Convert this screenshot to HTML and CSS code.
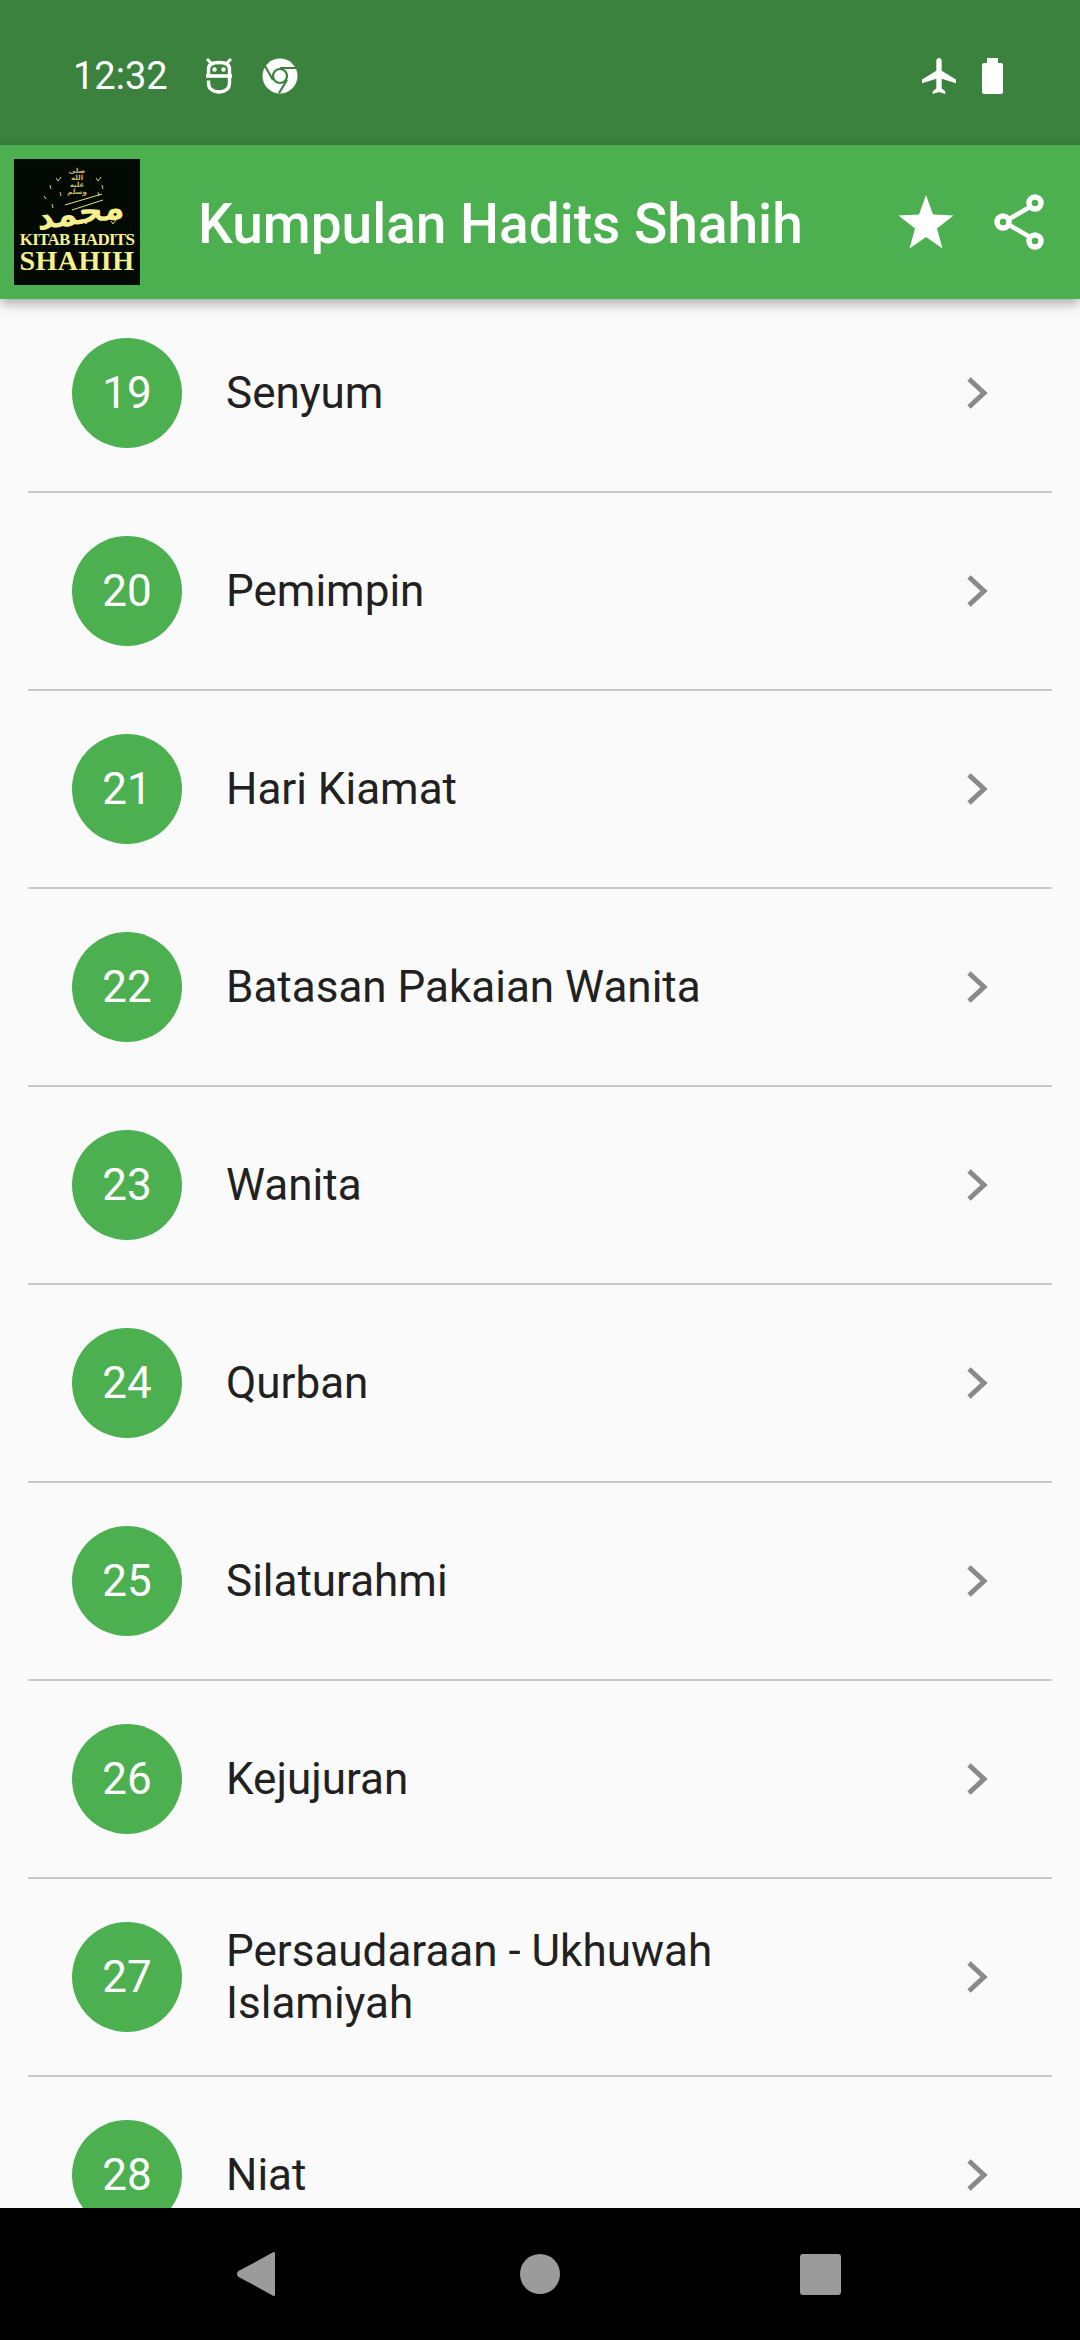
FILE: index.html
```html
<!DOCTYPE html>
<html>
<head>
    <title>Kumpulan Hadits Shahih</title>
    <link rel="stylesheet" href="styles.css">
</head>
<body>
    <div class="screen">
        <div class="status-bar">
            <div class="status-left">
                <span class="clock">12:32</span>
                <svg class="icon-debug" width="28" height="36" viewBox="0 0 28 36">
                    <path d="M2 1 L6 5 M26 1 L22 5" stroke="#fff" stroke-width="3" fill="none"/>
                    <path d="M3.500 18 V11 C3.500 7 7 4.500 14 4.500 C21 4.500 24.500 7 24.500 11 V17" stroke="#fff" stroke-width="3.400" fill="none"/>
                    <path d="M1 18 H27" stroke="#fff" stroke-width="3.600"/>
                    <path d="M3.500 22.500 V25 C3.500 31 8 34 14 34 C20 34 24.500 31 24.500 25 V18" stroke="#fff" stroke-width="3.400" fill="none"/>
                    <circle cx="9.500" cy="11.500" r="2.200" fill="#fff"/>
                    <circle cx="18.500" cy="11.500" r="2.200" fill="#fff"/>
                </svg>
                <svg class="icon-chrome" width="36" height="36" viewBox="0 0 36 36">
                    <circle cx="18" cy="18" r="17.500" fill="#fff"/>
                    <circle cx="18" cy="18" r="7" fill="#fff" stroke="#3b823e" stroke-width="2.200"/>
                    <path d="M18 10 H34 M11 22 L3 8 M25 22 L17 35" stroke="#3b823e" stroke-width="2.200" fill="none"/>
                </svg>
            </div>
            <div class="status-right">
                <svg class="icon-plane" width="34" height="36" viewBox="2 2 19 20">
                    <path d="M21 16v-2l-8-5V3.500c0-.83-.67-1.500-1.500-1.500S10 2.670 10 3.500V9l-8 5v2l8-2.500V19l-2 1.500V22l3.500-1 3.500 1v-1.500L13 19v-5.500l8 2.500z" fill="#fff"/>
                </svg>
                <div class="battery"></div>
            </div>
        </div>

        <div class="app-bar">
            <div class="logo">
                <svg class="logo-marks" width="126" height="126" viewBox="0 0 126 126">
                    <path d="M42 19 L44 22 L47 18 M82 19 L84 22 L87 18 M36 26 L37 30 M88 26 L89 30 M46 33 L47 37 M84 33 L85 37 M30 37 L32 40 M38 45 L39 49 M67 52 L69 55 L72 51 M38 64 L40 67 M70 62 L72 65 L75 61 M97 62 L99 65 L102 61" stroke="#d8cf78" stroke-width="1" fill="none"/>
                    <path d="M51 46 L88 35 M58 51 L89 41" stroke="#e9e084" stroke-width="1" fill="none"/>
                </svg>
                <div class="logo-salawat">صلى الله عليه وسلم</div>
                <div class="logo-arabic">محمد</div>
                <div class="logo-kitab">KITAB HADITS</div>
                <div class="logo-shahih">SHAHIH</div>
            </div>
            <h1 class="app-title">Kumpulan Hadits Shahih</h1>
            <svg class="icon-star" width="56" height="54" viewBox="0 0 56 54">
                <path d="M28 0 L35 19.500 L55.500 20.500 L39 33.500 L44.500 53.500 L28 42 L11.500 53.500 L17 33.500 L0.500 20.500 L21 19.500 Z" fill="#fff"/>
            </svg>
            <svg class="icon-share" width="52" height="58" viewBox="0 0 52 58">
                <path d="M41 11 L10 29 L41 47" stroke="#fff" stroke-width="4.500" fill="none"/>
                <circle cx="41" cy="10" r="6" fill="#4caf50" stroke="#fff" stroke-width="5.500"/>
                <circle cx="9" cy="29" r="6" fill="#4caf50" stroke="#fff" stroke-width="5.500"/>
                <circle cx="41" cy="48" r="6" fill="#4caf50" stroke="#fff" stroke-width="5.500"/>
            </svg>
        </div>

        <div class="list-wrap">
            <ul class="hadits-list" id="list"></ul>
        </div>

        <div class="nav-bar">
            <svg width="40" height="46" viewBox="0 0 40 46">
                <path d="M38 2 V44 L3 25 Q1 23 3 21 Z" fill="#9b9b9b" stroke="#9b9b9b" stroke-width="2" stroke-linejoin="round"/>
            </svg>
            <div class="nav-home"></div>
            <div class="nav-recent"></div>
        </div>
    </div>

    <script>
        const topics = [
            [19, "Senyum"], [20, "Pemimpin"], [21, "Hari Kiamat"], [22, "Batasan Pakaian Wanita"],
            [23, "Wanita"], [24, "Qurban"], [25, "Silaturahmi"], [26, "Kejujuran"],
            [27, "Persaudaraan - Ukhuwah Islamiyah"], [28, "Niat"]
        ];
        const list = document.getElementById("list");
        topics.forEach(function(t) {
            const li = document.createElement("li");
            li.className = "row";
            li.innerHTML = '<div class="num">' + t[0] + '</div>' +
                '<div class="row-title">' + t[1] + '</div>' +
                '<svg class="chevron" width="24" height="34" viewBox="0 0 24 34"><path d="M3 3 L18 17 L3 31" stroke="#8a8a8a" stroke-width="5" fill="none"/></svg>';
            list.appendChild(li);
        });
    </script>
</body>
</html>
```

FILE: styles.css
```css
body, h1, ul, li {
    margin: 0;
    padding: 0;
}

body {
    font-family: Roboto, sans-serif;
    background-color: #fafafa;
}

.screen {
    width: 1080px;
    height: 2340px;
    display: flex;
    flex-direction: column;
    overflow: hidden;
}

.status-bar {
    height: 145px;
    flex-shrink: 0;
    background-color: #3b823e;
    display: flex;
    justify-content: space-between;
    align-items: center;
    padding: 6px 77px 0 73px;
    box-sizing: border-box;
    color: #fff;
}

.status-left, .status-right {
    display: flex;
    align-items: center;
}

.clock {
    font-size: 38px;
    width: 132px;
}

.icon-chrome {
    margin-left: 29px;
}

.battery {
    position: relative;
    width: 21px;
    height: 31px;
    margin: 5px 0 0 26px;
    background-color: #fff;
    border-radius: 2px;
}

.battery::before {
    content: "";
    position: absolute;
    top: -5px;
    left: 5px;
    width: 11px;
    height: 5px;
    background-color: #fff;
}

.app-bar {
    position: relative;
    z-index: 1;
    height: 154px;
    flex-shrink: 0;
    background-color: #4caf50;
    display: flex;
    align-items: center;
    padding-left: 14px;
    box-sizing: border-box;
    box-shadow: 0 4px 12px rgba(0, 0, 0, 0.35);
    color: #fff;
}

.logo {
    position: relative;
    width: 126px;
    height: 126px;
    flex-shrink: 0;
    background-color: #030a03;
    color: #f7f08c;
    font-family: "Liberation Serif", serif;
    text-align: center;
    overflow: hidden;
    display: flex;
    flex-direction: column;
    align-items: center;
}

.logo-marks {
    position: absolute;
    top: 0;
    left: 0;
}

.logo-salawat {
    width: 28px;
    height: 27px;
    margin-top: 9px;
    font-family: "DejaVu Sans", sans-serif;
    font-size: 7px;
    line-height: 7px;
    font-weight: bold;
    color: #c9b765;
}

.logo-arabic {
    height: 34px;
    margin-left: 6px;
    font-family: "DejaVu Sans", sans-serif;
    font-size: 34px;
    line-height: 34px;
    font-weight: bold;
    transform: rotate(-8deg);
}

.logo-kitab {
    font-size: 17px;
    line-height: 17px;
    font-weight: bold;
    letter-spacing: -0.7px;
    white-space: nowrap;
    margin-top: 2px;
}

.logo-shahih {
    font-size: 28px;
    line-height: 24px;
    font-weight: bold;
    letter-spacing: 0.5px;
    margin-top: 1px;
}

.app-title {
    flex: 1;
    margin-left: 58px;
    padding-top: 3px;
    font-size: 55px;
    font-weight: 500;
    white-space: nowrap;
}

.icon-star {
    margin-right: 40px;
}

.icon-share {
    margin-right: 34px;
}

.list-wrap {
    flex: 1;
    overflow: hidden;
    background-color: #fafafa;
}

.hadits-list {
    list-style: none;
    margin-top: -4px;
}

.row {
    height: 198px;
    box-sizing: border-box;
    margin: 0 28px;
    padding: 0 62px 0 44px;
    border-bottom: 2px solid #c8c8c8;
    display: flex;
    align-items: center;
}

.num {
    width: 110px;
    height: 110px;
    flex-shrink: 0;
    border-radius: 50%;
    background-color: #4caf50;
    color: #fff;
    font-size: 44px;
    display: flex;
    justify-content: center;
    align-items: center;
}

.row-title {
    flex: 1;
    margin-left: 44px;
    margin-right: 151px;
    font-size: 44px;
    line-height: 52px;
    color: #212121;
}

.chevron {
    flex-shrink: 0;
}

.nav-bar {
    height: 132px;
    flex-shrink: 0;
    position: relative;
    z-index: 1;
    background-color: #000;
    display: flex;
    align-items: center;
    padding-left: 236px;
    box-sizing: border-box;
}

.nav-home {
    width: 40px;
    height: 40px;
    margin-left: 244px;
    border-radius: 50%;
    background-color: #9b9b9b;
}

.nav-recent {
    width: 41px;
    height: 41px;
    margin-left: 240px;
    border-radius: 3px;
    background-color: #9b9b9b;
}
```
